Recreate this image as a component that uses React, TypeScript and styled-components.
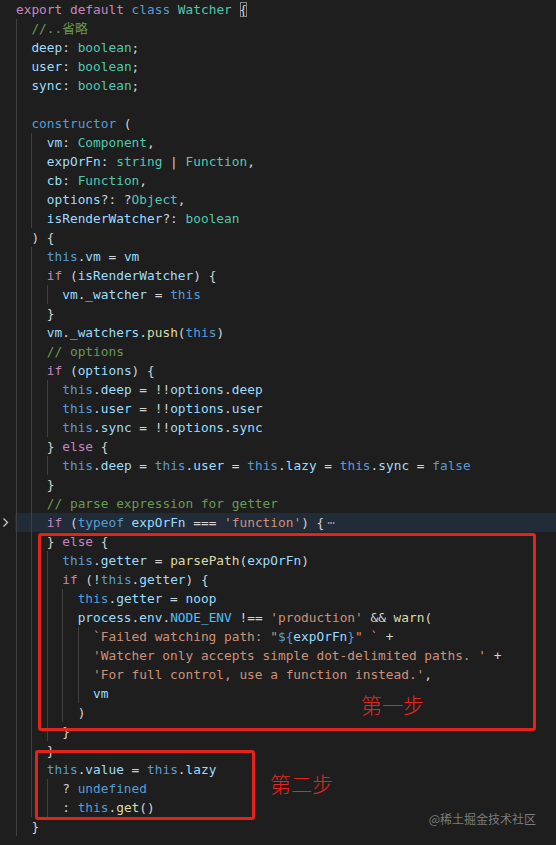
import React from "react";
import styled, { createGlobalStyle } from "styled-components";

const Global = createGlobalStyle`
  html, body { margin: 0; padding: 0; background: #1e1e1e; }
  #root { width: 556px; height: 845px; overflow: hidden; }
`;

type K = "kw" | "st" | "ty" | "va" | "fn" | "str" | "cm" | "p" | "cst" | "match" | "fold";

const COLORS: Record<K, string> = {
  kw: "#C586C0",
  st: "#569CD6",
  ty: "#4EC9B0",
  va: "#9CDCFE",
  fn: "#DCDCAA",
  str: "#CE9178",
  cm: "#6A9955",
  p: "#D4D4D4",
  cst: "#4FC1FF",
  match: "#D4D4D4",
  fold: "#8a8f96",
};

type Tok = [K, string];
type LineData = { level: number; toks: Tok[]; highlight?: boolean };

const LINES: LineData[] = [
  { level: 0, toks: [["kw", "export"], ["p", " "], ["kw", "default"], ["p", " "], ["st", "class"], ["p", " "], ["ty", "Watcher"], ["p", " "], ["match", "{"]] },
  { level: 1, toks: [["cm", "//..省略"]] },
  { level: 1, toks: [["va", "deep"], ["p", ": "], ["ty", "boolean"], ["p", ";"]] },
  { level: 1, toks: [["va", "user"], ["p", ": "], ["ty", "boolean"], ["p", ";"]] },
  { level: 1, toks: [["va", "sync"], ["p", ": "], ["ty", "boolean"], ["p", ";"]] },
  { level: 1, toks: [] },
  { level: 1, toks: [["st", "constructor"], ["p", " ("]] },
  { level: 2, toks: [["va", "vm"], ["p", ": "], ["ty", "Component"], ["p", ","]] },
  { level: 2, toks: [["va", "expOrFn"], ["p", ": "], ["ty", "string"], ["p", " | "], ["ty", "Function"], ["p", ","]] },
  { level: 2, toks: [["va", "cb"], ["p", ": "], ["ty", "Function"], ["p", ","]] },
  { level: 2, toks: [["va", "options"], ["p", "?: ?"], ["ty", "Object"], ["p", ","]] },
  { level: 2, toks: [["va", "isRenderWatcher"], ["p", "?: "], ["ty", "boolean"]] },
  { level: 1, toks: [["p", ") {"]] },
  { level: 2, toks: [["st", "this"], ["p", "."], ["va", "vm"], ["p", " = "], ["va", "vm"]] },
  { level: 2, toks: [["kw", "if"], ["p", " ("], ["va", "isRenderWatcher"], ["p", ") {"]] },
  { level: 3, toks: [["va", "vm"], ["p", "."], ["va", "_watcher"], ["p", " = "], ["st", "this"]] },
  { level: 2, toks: [["p", "}"]] },
  { level: 2, toks: [["va", "vm"], ["p", "."], ["va", "_watchers"], ["p", "."], ["fn", "push"], ["p", "("], ["st", "this"], ["p", ")"]] },
  { level: 2, toks: [["cm", "// options"]] },
  { level: 2, toks: [["kw", "if"], ["p", " ("], ["va", "options"], ["p", ") {"]] },
  { level: 3, toks: [["st", "this"], ["p", "."], ["va", "deep"], ["p", " = !!"], ["va", "options"], ["p", "."], ["va", "deep"]] },
  { level: 3, toks: [["st", "this"], ["p", "."], ["va", "user"], ["p", " = !!"], ["va", "options"], ["p", "."], ["va", "user"]] },
  { level: 3, toks: [["st", "this"], ["p", "."], ["va", "sync"], ["p", " = !!"], ["va", "options"], ["p", "."], ["va", "sync"]] },
  { level: 2, toks: [["p", "} "], ["kw", "else"], ["p", " {"]] },
  { level: 3, toks: [["st", "this"], ["p", "."], ["va", "deep"], ["p", " = "], ["st", "this"], ["p", "."], ["va", "user"], ["p", " = "], ["st", "this"], ["p", "."], ["va", "lazy"], ["p", " = "], ["st", "this"], ["p", "."], ["va", "sync"], ["p", " = "], ["st", "false"]] },
  { level: 2, toks: [["p", "}"]] },
  { level: 2, toks: [["cm", "// parse expression for getter"]] },
  { level: 2, highlight: true, toks: [["kw", "if"], ["p", " ("], ["st", "typeof"], ["p", " "], ["va", "expOrFn"], ["p", " === "], ["str", "'function'"], ["p", ") {"], ["fold", "⋯"]] },
  { level: 2, toks: [["p", "} "], ["kw", "else"], ["p", " {"]] },
  { level: 3, toks: [["st", "this"], ["p", "."], ["va", "getter"], ["p", " = "], ["fn", "parsePath"], ["p", "("], ["va", "expOrFn"], ["p", ")"]] },
  { level: 3, toks: [["kw", "if"], ["p", " (!"], ["st", "this"], ["p", "."], ["va", "getter"], ["p", ") {"]] },
  { level: 4, toks: [["st", "this"], ["p", "."], ["va", "getter"], ["p", " = "], ["va", "noop"]] },
  { level: 4, toks: [["va", "process"], ["p", "."], ["va", "env"], ["p", "."], ["cst", "NODE_ENV"], ["p", " !== "], ["str", "'production'"], ["p", " && "], ["fn", "warn"], ["p", "("]] },
  { level: 5, toks: [["str", "`Failed watching path: \""], ["st", "${"], ["va", "expOrFn"], ["st", "}"], ["str", "\" `"], ["p", " +"]] },
  { level: 5, toks: [["str", "'Watcher only accepts simple dot-delimited paths. '"], ["p", " +"]] },
  { level: 5, toks: [["str", "'For full control, use a function instead.'"], ["p", ","]] },
  { level: 5, toks: [["va", "vm"]] },
  { level: 4, toks: [["p", ")"]] },
  { level: 3, toks: [["p", "}"]] },
  { level: 2, toks: [["p", "}"]] },
  { level: 2, toks: [["st", "this"], ["p", "."], ["va", "value"], ["p", " = "], ["st", "this"], ["p", "."], ["va", "lazy"]] },
  { level: 3, toks: [["p", "? "], ["st", "undefined"]] },
  { level: 3, toks: [["p", ": "], ["st", "this"], ["p", "."], ["fn", "get"], ["p", "()"]] },
  { level: 1, toks: [["p", "}"]] },
];

const Editor = styled.div`
  position: relative;
  width: 556px;
  height: 845px;
  background: #1e1e1e;
  font-family: "DejaVu Sans Mono", "Liberation Mono", "Noto Sans CJK SC", monospace;
  font-size: 12.8px;
  color: #d4d4d4;
  overflow: hidden;
`;

const Row = styled.div`
  display: flex;
  height: 19px;
  line-height: 19px;
`;

const Gutter = styled.div`
  width: 15px;
  flex: none;
  display: flex;
  align-items: center;
  justify-content: flex-start;
  padding-left: 2px;
  box-sizing: border-box;
`;

const Code = styled.div<{ $hl?: boolean }>`
  flex: 1;
  padding-left: 1px;
  white-space: pre;
  background: ${(p) => (p.$hl ? "#212c38" : "transparent")};
`;

const Guide = styled.span`
  display: inline-block;
  width: 2ch;
  height: 19px;
  vertical-align: top;
  box-sizing: border-box;
  border-left: 1px solid #404040;
`;

const T = styled.span<{ $k: K }>`
  color: ${(p) => COLORS[p.$k]};
  ${(p) =>
    p.$k === "match"
      ? "outline: 1px solid #888888; outline-offset: -1px; padding: 0;"
      : ""}
  ${(p) => (p.$k === "fold" ? "margin-left: 3px; letter-spacing: 0;" : "")}
`;

const RedBox = styled.div<{ $x: number; $y: number; $w: number; $h: number }>`
  position: absolute;
  left: ${(p) => p.$x}px;
  top: ${(p) => p.$y}px;
  width: ${(p) => p.$w}px;
  height: ${(p) => p.$h}px;
  border: 3px solid #e3241c;
  border-radius: 3px;
  box-sizing: border-box;
  pointer-events: none;
`;

const Label = styled.div<{ $x: number; $y: number }>`
  position: absolute;
  left: ${(p) => p.$x}px;
  top: ${(p) => p.$y}px;
  font-family: "Noto Sans CJK SC", sans-serif;
  font-weight: 300;
  font-size: 21px;
  line-height: 24px;
  color: #e3261e;
  white-space: nowrap;
`;

const Watermark = styled.div`
  position: absolute;
  right: 20px;
  top: 810px;
  font-family: "Noto Sans CJK SC", sans-serif;
  font-size: 12px;
  line-height: 18px;
  color: #7c7c7c;
  white-space: nowrap;
`;

const Chevron = () => (
  <svg width="7" height="11" viewBox="0 0 7 11">
    <polyline points="1.5,1.5 5.5,5.5 1.5,9.5" fill="none" stroke="#c5c5c5" strokeWidth="1.3" />
  </svg>
);

export default function App() {
  return (
    <>
      <Global />
      <Editor>
        {LINES.map((ln, i) => (
          <Row key={i}>
            <Gutter>{ln.highlight ? <Chevron /> : null}</Gutter>
            <Code $hl={ln.highlight}>
              {Array.from({ length: ln.level }).map((_, g) => (
                <Guide key={g} />
              ))}
              {ln.toks.map(([k, s], j) => (
                <T key={j} $k={k}>
                  {s}
                </T>
              ))}
            </Code>
          </Row>
        ))}
        <RedBox $x={38} $y={533} $w={498} $h={198} />
        <RedBox $x={35} $y={750} $w={220} $h={70} />
        <Label $x={361} $y={692}>第一步</Label>
        <Label $x={270} $y={771}>第二步</Label>
        <Watermark>@稀土掘金技术社区</Watermark>
      </Editor>
    </>
  );
}
